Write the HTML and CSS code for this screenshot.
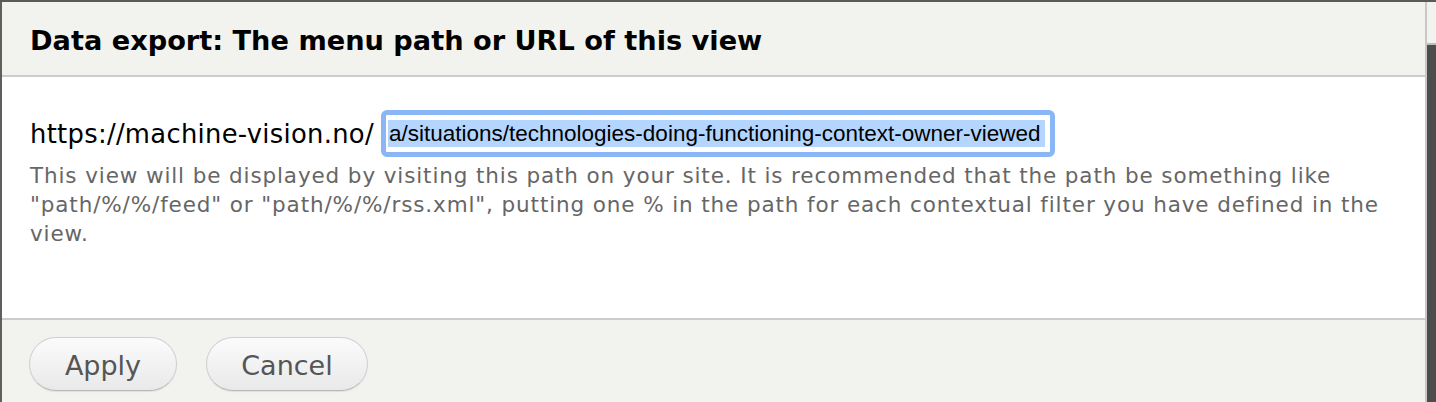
FILE: index.html
```html
<!DOCTYPE html>
<html>
<head>
<meta charset="utf-8">
<link rel="stylesheet" href="styles.css">
</head>
<body>
<div class="page">
  <div class="dialog">
    <div class="header"><h1 class="title">Data export: The menu path or URL of this view</h1></div>
    <div class="content">
      <div class="path-row">
        <span class="prefix">https://machine-vision.no/</span>
        <div class="input"><span class="sel">a/situations/technologies-doing-functioning-context-owner-viewed</span></div>
      </div>
      <p class="desc">This view will be displayed by visiting this path on your site. It is recommended that the path be something like "path/%/%/feed" or "path/%/%/rss.xml", putting one % in the path for each contextual filter you have defined in the view.</p>
    </div>
    <div class="footer">
      <button class="btn btn-apply">Apply</button>
      <button class="btn btn-cancel">Cancel</button>
    </div>
  </div>
  <div class="side">
    <div class="side-top"></div>
    <div class="side-dark"></div>
  </div>
</div>
</body>
</html>
```
FILE: styles.css
```css
html, body {
  margin: 0;
  padding: 0;
  background: #4d4d4d;
}
.page {
  display: flex;
  width: 1436px;
  height: 402px;
  overflow: hidden;
  border-top: 2px solid #5a5a5a;
  box-sizing: border-box;
}
.dialog {
  width: 1427px;
  display: flex;
  flex-direction: column;
  border-left: 2px solid #5f5f5f;
  border-right: 2px solid #c8c8c8;
  box-sizing: border-box;
  background: #fff;
  font-family: "DejaVu Sans", sans-serif;
}
.header {
  height: 73px;
  background: #f2f2ee;
  border-bottom: 2px solid #cccccc;
  display: flex;
  align-items: center;
  padding-left: 28px;
  flex: none;
}
.title {
  margin: 0;
  font-size: 27.2px;
  font-weight: bold;
  color: #000;
  position: relative;
  top: 2px;
}
.content {
  height: 241px;
  flex: none;
  padding: 33px 0 0 28px;
  box-sizing: border-box;
}
.path-row {
  display: flex;
  align-items: center;
  gap: 7px;
}
.prefix {
  font-size: 25.8px;
  color: #000;
  letter-spacing: 0.3px;
}
.input {
  width: 674px;
  height: 47px;
  box-sizing: border-box;
  border: 5px solid #8ab6f5;
  border-radius: 6px;
  background: #fff;
  padding: 0 0 0 2px;
  display: flex;
  align-items: center;
  overflow: hidden;
  font-family: "Liberation Sans", Arial, sans-serif;
  font-size: 22.5px;
  color: #000;
  white-space: nowrap;
}
.sel {
  background: #b4d5fe;
  padding: 1px 4px 1px 1px;
  line-height: 25px;
}
.desc {
  margin: 4px 0 0 0;
  font-size: 21.5px;
  letter-spacing: 0.88px;
  line-height: 29px;
  color: #666;
  padding-right: 40px;
}
.footer {
  flex: 1;
  background: #f2f2ee;
  border-top: 2px solid #cccccc;
  padding: 17px 0 0 27px;
  display: flex;
  gap: 29px;
  align-items: flex-start;
}
.btn {
  font-family: "DejaVu Sans", sans-serif;
  font-size: 27px;
  color: #555;
  height: 54px;
  border: 1px solid #cfcfcf;
  border-bottom-color: #b8b8b8;
  border-radius: 27px;
  background: linear-gradient(#fbfbfb, #e9e9e9);
  padding: 2px 0 0 0;
  box-shadow: 0 1px 1px rgba(0,0,0,0.08);
}
.btn-apply { width: 148px; }
.btn-cancel { width: 162px; }
.side {
  width: 9px;
  display: flex;
  flex-direction: column;
}
.side-top {
  height: 41px;
  background: #f2f2ee;
  border-bottom: 2px solid #bdbdbd;
}
.side-dark {
  flex: 1;
  background: #4d4d4d;
}
```
